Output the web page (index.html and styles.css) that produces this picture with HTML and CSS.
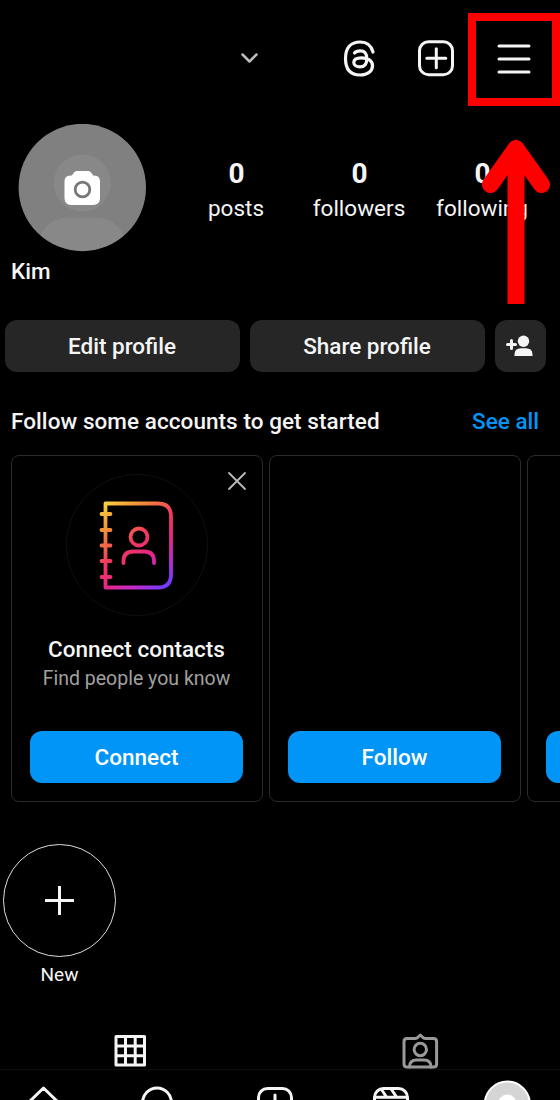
FILE: index.html
```html
<!DOCTYPE html>
<html lang="en">
<head>
<meta charset="utf-8">
<title>Profile</title>
<link rel="stylesheet" href="styles.css">
</head>
<body>
<div class="screen">
  <header class="topbar">
    <svg class="chevron" width="20" height="14" viewBox="0 0 20 14"><path d="M2.500 3.500l7 7 7-7"/></svg>
    <svg class="threads" width="36" height="40" viewBox="0 0 36 40"><path d="M31 14C29.200 7 24.500 4 18.300 4C8.500 4 3.500 10 3.500 20.500S8.500 37 18.300 37C26 37 30.500 32.800 30.500 27.700C30.500 22.300 25 19.800 19.500 19.800C14.500 19.800 11.800 21.800 11.800 24.500C11.800 27.400 14.700 28.900 17.800 28.900C22.600 28.900 24.800 25.600 24.800 20.700C24.800 15.200 22.600 12.800 18.200 12.800C15.700 12.800 13.800 13.300 12.500 15"/></svg>
    <svg class="create" width="38" height="38" viewBox="0 0 38 38"><rect x="2.500" y="2.700" width="33" height="33" rx="9"/><path d="M19.300 9.800v19M9.800 19.300h19"/></svg>
    <div class="menu">
      <svg width="34" height="32" viewBox="0 0 34 32"><path d="M2 3h30M2 16h30M2 29h30"/></svg>
    </div>
  </header>

  <section class="profile">
    <div class="avatar">
      <svg width="128" height="128" viewBox="0 0 128 128">
        <circle cx="64.300" cy="63.500" r="63.700" fill="#808080"/>
        <circle cx="64.300" cy="59" r="28.500" fill="#888"/>
        <path d="M22.500 111Q32 94 48 94H80Q96 94 106 111A63.500 63.500 0 0 1 22.500 111Z" fill="#888"/>
        <path d="M54 51.500q2-4.500 5-4.500h11q3 0 5 4.500h1q6 0 6 6v16.500q0 7-7 7H53.500q-7 0-7-7V57.500q0-6 6-6z" fill="#fff"/>
        <circle cx="64.500" cy="65.500" r="7.300" fill="#fff" stroke="#777" stroke-width="2.800"/>
      </svg>
    </div>
    <div class="stat"><b>0</b><span>posts</span></div>
    <div class="stat"><b>0</b><span>followers</span></div>
    <div class="stat"><b>0</b><span>following</span></div>
    <svg class="arrow" width="70" height="170" viewBox="0 0 70 170"><path class="head" d="M9.500 47.500L35 11.500L60.500 47.500"/><path class="shaft" d="M35 12V167"/></svg>
  </section>
  <h1 class="name">Kim</h1>

  <div class="actions">
    <button>Edit profile</button>
    <button>Share profile</button>
    <button class="add">
      <svg width="28" height="24" viewBox="0 0 28 24"><circle cx="17.500" cy="7.200" r="5.700"/><path d="M8.500 22v-1.500q0-6.300 6.500-6.300h5q6.500 0 6.500 6.300v1.500z"/><path class="plus" d="M5.500 6.500v8M1.500 10.500h8"/></svg>
    </button>
  </div>

  <div class="suggest"><h2>Follow some accounts to get started</h2><a>See all</a></div>

  <div class="cards">
    <article class="card">
      <svg class="close" width="20" height="20" viewBox="0 0 20 20"><path d="M2 2l16 16M18 2L2 18"/></svg>
      <div class="ring">
        <svg width="78" height="92" viewBox="0 0 78 92">
          <defs>
            <linearGradient id="warm" gradientUnits="userSpaceOnUse" x1="8" y1="2" x2="76" y2="90">
              <stop offset="0" stop-color="#fbd43e"/><stop offset=".22" stop-color="#f08a38"/><stop offset=".43" stop-color="#f43b5b"/><stop offset=".62" stop-color="#e52687"/><stop offset=".78" stop-color="#bd2bcf"/><stop offset=".94" stop-color="#703bff"/>
            </linearGradient>
          </defs>
          <path d="M7.500 4.500H60Q73 4.500 73 17.500V75.500Q73 88.500 60 88.500H7.500ZM3.500 15h9M3.500 31h9M3.500 46.500h9M3.500 62h9M3.500 78h9"/>
          <circle cx="41" cy="38" r="8.500"/>
          <path d="M25.500 64v-2q0-9.500 10-9.500H46q10 0 10 9.500v2"/>
        </svg>
      </div>
      <h3>Connect contacts</h3>
      <p>Find people you know</p>
      <button>Connect</button>
    </article>
    <article class="card"><button>Follow</button></article>
    <article class="card"><button></button></article>
  </div>

  <div class="highlight">
    <div class="bubble"><svg width="30" height="30" viewBox="0 0 30 30"><path d="M14.500 0v29M0 14.500h29"/></svg></div>
    <span>New</span>
  </div>

  <div class="tabs">
    <svg class="grid" width="34" height="34" viewBox="0 0 34 34"><path d="M3 2.500h28.500v28.500H3zM12.500 2.500v28.500M22.200 2.500v28.500M3 12h28.500M3 21.700h28.500"/></svg>
    <svg class="tagged" width="38" height="38" viewBox="0 0 38 38"><path d="M6 6.500h8q2 0 3.200-1.500L19.300 3l2.100 2q1.200 1.500 3.200 1.500h8q3 0 3 3v22.500q0 3-3 3H6q-3 0-3-3V9.500q0-3 3-3z"/><circle cx="19.300" cy="17.500" r="6.200"/><path d="M8.500 35q0-7 7-7h7.500q7 0 7 7"/></svg>
  </div>

  <nav class="bottom">
    <svg width="40" height="40" viewBox="0 0 40 40"><path d="M4 19L20.500 3L37 19V38H4Z"/></svg>
    <svg width="40" height="40" viewBox="0 0 40 40"><circle cx="18" cy="17.500" r="14.500"/><path d="M28 28l10 10"/></svg>
    <svg width="40" height="40" viewBox="0 0 40 40"><rect x="3.500" y="3.500" width="33" height="33" rx="9"/><path d="M20 10v20M10 20h20"/></svg>
    <svg width="40" height="40" viewBox="0 0 40 40"><rect x="3.500" y="3.500" width="33" height="33" rx="9"/><path d="M4 12.300h32M10.500 4.500l5 7.500M20.500 4.500l5 7.500"/></svg>
    <svg class="me" width="50" height="50" viewBox="0 0 50 50"><circle cx="25.300" cy="25" r="22.500" fill="#d5d5d5" stroke="#fff" stroke-width="2"/><circle cx="25.300" cy="24.500" r="9" fill="#fff" stroke="none"/></svg>
  </nav>
</div>
</body>
</html>
```
FILE: styles.css
```css
* { box-sizing: border-box; }
body { margin: 0; background: #000; color: #f5f5f5; font-family: Roboto, sans-serif; }
.screen { width: 560px; height: 1100px; overflow: hidden; background: #000; }
svg { display: block; flex: none; fill: none; stroke: #f5f5f5; stroke-width: 3; stroke-linecap: round; stroke-linejoin: round; }
h1, h2, h3, p { margin: 0; font-weight: 500; }
button { border: 0; padding: 0; font: 500 22.5px/52px Roboto, sans-serif; color: #f5f5f5; }

.topbar { height: 124px; padding: 13px 0 0 240px; display: flex; align-items: flex-start; }
.chevron { margin: 38px 82px 0 0; stroke: #bbb; stroke-width: 2.5; }
.threads { margin: 25px 39px 0 0; stroke-width: 3.2; }
.create { margin: 26px 13px 0 0; }
.menu { width: 92px; height: 93px; border: 8.5px solid #f00; display: grid; place-items: center; }
.menu svg { margin-top: -2px; }

.profile { position: relative; height: 132px; padding-left: 18px; display: grid; grid-template-columns: 157px 123px 123px 123px; }
.avatar svg { stroke: none; }
.stat { padding-top: 31px; display: flex; flex-direction: column; align-items: center; font-size: 22.5px; }
.stat b { font-size: 28px; line-height: 38px; }
.stat span { line-height: 30px; margin-left: -1px; }
.arrow { position: absolute; left: 481px; top: 13px; stroke: #f00; stroke-width: 17px; }
.arrow .shaft { stroke-linecap: butt; }
.name { height: 64px; padding-left: 11px; font-size: 22.5px; line-height: 31px; }

.actions { display: grid; grid-template-columns: 235px 235px 51px; gap: 10px; padding-left: 4.5px; }
.actions button { height: 52px; border-radius: 12px; background: #262626; }
.actions .add { display: grid; place-items: center; }
.add svg { fill: #f5f5f5; stroke: none; }
.add .plus { stroke: #f5f5f5; stroke-width: 3; }

.suggest { height: 83px; padding: 34px 21px 0 11px; display: flex; justify-content: space-between; font-size: 22.5px; font-weight: 500; line-height: 31px; }
.suggest h2 { font-size: 22.5px; letter-spacing: .06px; }
.suggest a { color: #0095f6; }

.cards { display: flex; gap: 6px; padding-left: 10.5px; }
.card { position: relative; flex: none; width: 252px; height: 347px; border: 1px solid #2b2b2b; border-radius: 8px; padding: 18px; display: flex; flex-direction: column; align-items: center; }
.card button { width: 213px; height: 52px; margin-top: auto; border-radius: 12px; background: #0095f6; color: #fff; }
.close { position: absolute; right: 15px; top: 15px; stroke: #bbb; stroke-width: 1.8; }
.ring { width: 142px; height: 142px; border: 1px solid #0f0f0f; border-radius: 50%; display: grid; place-items: center; }
.ring svg { stroke: url(#warm); stroke-width: 3.8; }
.card h3 { margin-top: 18px; font-size: 22.5px; line-height: 31px; }
.card p { font-size: 19.5px; font-weight: 400; line-height: 28px; color: #a0a0a0; }

.highlight { width: 113px; margin: 42px 0 0 3px; display: flex; flex-direction: column; align-items: center; font-size: 19px; line-height: 36px; }
.bubble { width: 113px; height: 113px; border: 1.5px solid #ddd; border-radius: 50%; display: grid; place-items: center; }
.bubble svg { stroke-linecap: butt; }

.tabs { height: 76px; display: grid; grid-template-columns: 1fr 1fr; justify-items: center; padding-top: 39px; }
.grid { margin-right: 20px; margin-top: 2px; }
.tagged { stroke: #999; }

.bottom { border-top: 1px solid #0f0f0f; display: flex; padding: 15px 0 0 23px; gap: 76px; }
.bottom .me { margin: -6px 0 0 -5px; }
```
